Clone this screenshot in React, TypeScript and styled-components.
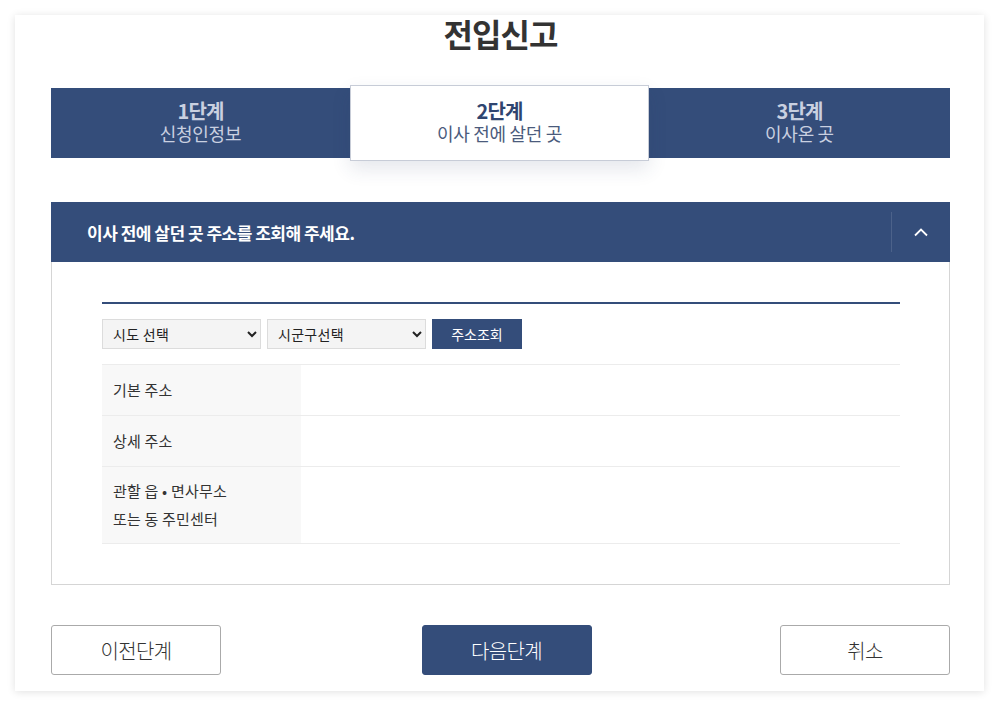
import React from "react";
import styled, { createGlobalStyle } from "styled-components";

const Global = createGlobalStyle`
  html, body { margin: 0; padding: 0; background: #ffffff; }
  body { font-family: "Noto Sans CJK KR", "Noto Sans", sans-serif; color: #333; }
  * { box-sizing: border-box; }
`;

const NAVY = "#344d7a";

const Page = styled.div`
  padding: 15px;
`;

const Card = styled.div`
  width: 969px;
  background: #fff;
  box-shadow: 0 1px 8px rgba(0, 0, 0, 0.12);
  padding: 0 34px 16px 36px;
`;

const Title = styled.h1`
  margin: 0;
  font-size: 32px;
  line-height: 36px;
  font-weight: 700;
  text-align: center;
  color: #333;
  letter-spacing: -1px;
`;

const Steps = styled.div`
  margin-top: 37px;
  display: flex;
  height: 70px;
  background: ${NAVY};
`;

const Step = styled.div<{ $active?: boolean; $w?: number }>`
  flex: ${(p) => (p.$w ? `0 0 ${p.$w}px` : "1")};
  display: flex;
  flex-direction: column;
  align-items: center;
  justify-content: center;
  padding-bottom: 2px;
  background: ${(p) => (p.$active ? "#fff" : NAVY)};
  border: ${(p) => (p.$active ? "1px solid #c7ccd7" : "none")};
  margin: ${(p) => (p.$active ? "-3px 0" : "0")};
  box-shadow: ${(p) => (p.$active ? "0 8px 18px rgba(40, 60, 100, 0.12)" : "none")};
  position: relative;
  z-index: ${(p) => (p.$active ? 1 : 0)};
  color: ${(p) => (p.$active ? "#2f4570" : "#c9d0e0")};
`;

const StepNum = styled.div`
  font-size: 20px;
  font-weight: 700;
  line-height: 23px;
  letter-spacing: -0.8px;
`;

const StepName = styled.div<{ $active?: boolean }>`
  font-size: 18px;
  line-height: 23px;
  letter-spacing: -0.3px;
  color: ${(p) => (p.$active ? "#4b5b7c" : "#c9d0e0")};
`;

const SectionHead = styled.div`
  margin-top: 44px;
  height: 60px;
  background: ${NAVY};
  display: flex;
  align-items: center;
`;

const SectionTitle = styled.div`
  flex: 1;
  padding-left: 36px;
  color: #fff;
  font-size: 17px;
  font-weight: 700;
  letter-spacing: -0.5px;
`;

const Toggle = styled.div`
  width: 59px;
  height: 40px;
  border-left: 1px solid rgba(255, 255, 255, 0.12);
  display: flex;
  align-items: center;
  justify-content: center;
`;

const SectionBody = styled.div`
  border: 1px solid #d5d5d5;
  border-top: none;
  padding: 40px 49px 40px 50px;
`;

const TopLine = styled.div`
  height: 2px;
  background: ${NAVY};
`;

const SearchRow = styled.div`
  margin-top: 15px;
  display: flex;
  gap: 6px;
  height: 30px;
`;

const Select = styled.select`
  width: 159px;
  height: 30px;
  background: #f4f4f4;
  border: 1px solid #dcdcdc;
  font-family: "Noto Sans CJK KR", sans-serif;
  font-size: 14px;
  letter-spacing: 0.3px;
  color: #222;
  padding: 0 6px;
`;

const SearchButton = styled.button`
  width: 90px;
  height: 30px;
  border: none;
  background: ${NAVY};
  color: #fff;
  font-family: "Noto Sans CJK KR", sans-serif;
  font-size: 14px;
  padding: 0;
`;

const Table = styled.div`
  margin-top: 15px;
  border-top: 1px solid #ececec;
`;

const Row = styled.div<{ $h: number }>`
  display: flex;
  height: ${(p) => p.$h}px;
  border-bottom: 1px solid #ececec;
`;

const Label = styled.div`
  width: 199px;
  background: #f8f8f8;
  padding-left: 11px;
  display: flex;
  align-items: center;
  font-size: 15px;
  letter-spacing: 0.2px;
  line-height: 28px;
  color: #333;
`;

const Value = styled.div`
  flex: 1;
`;

const Buttons = styled.div`
  margin-top: 40px;
  display: flex;
  justify-content: space-between;
`;

const Btn = styled.button<{ $primary?: boolean }>`
  width: 170px;
  height: 50px;
  border-radius: 3px;
  border: 1px solid ${(p) => (p.$primary ? NAVY : "#aaaaaa")};
  background: ${(p) => (p.$primary ? NAVY : "#fff")};
  color: ${(p) => (p.$primary ? "#fff" : "#333")};
  font-family: "Noto Sans CJK KR", sans-serif;
  font-size: 20px;
  font-weight: 300;
  letter-spacing: -0.6px;
  padding: 0;
  margin-left: ${(p) => (p.$primary ? "12px" : "0")};
`;

export default function App() {
  return (
    <Page>
      <Global />
      <Card>
        <Title>전입신고</Title>
        <Steps>
          <Step $w={299}>
            <StepNum>1단계</StepNum>
            <StepName>신청인정보</StepName>
          </Step>
          <Step $active $w={299}>
            <StepNum>2단계</StepNum>
            <StepName $active>이사 전에 살던 곳</StepName>
          </Step>
          <Step>
            <StepNum>3단계</StepNum>
            <StepName>이사온 곳</StepName>
          </Step>
        </Steps>

        <SectionHead>
          <SectionTitle>이사 전에 살던 곳 주소를 조회해 주세요.</SectionTitle>
          <Toggle>
            <svg width="16" height="10" viewBox="0 0 16 10">
              <path d="M2 8.5 L8 2.5 L14 8.5" fill="none" stroke="#fff" strokeWidth="1.8" />
            </svg>
          </Toggle>
        </SectionHead>
        <SectionBody>
          <TopLine />
          <SearchRow>
            <Select defaultValue="">
              <option value="">시도 선택</option>
            </Select>
            <Select defaultValue="">
              <option value="">시군구선택</option>
            </Select>
            <SearchButton>주소조회</SearchButton>
          </SearchRow>
          <Table>
            <Row $h={51}>
              <Label>기본 주소</Label>
              <Value />
            </Row>
            <Row $h={51}>
              <Label>상세 주소</Label>
              <Value />
            </Row>
            <Row $h={77}>
              <Label>
                관할 읍 • 면사무소
                <br />
                또는 동 주민센터
              </Label>
              <Value />
            </Row>
          </Table>
        </SectionBody>

        <Buttons>
          <Btn>이전단계</Btn>
          <Btn $primary>다음단계</Btn>
          <Btn>취소</Btn>
        </Buttons>
      </Card>
    </Page>
  );
}
